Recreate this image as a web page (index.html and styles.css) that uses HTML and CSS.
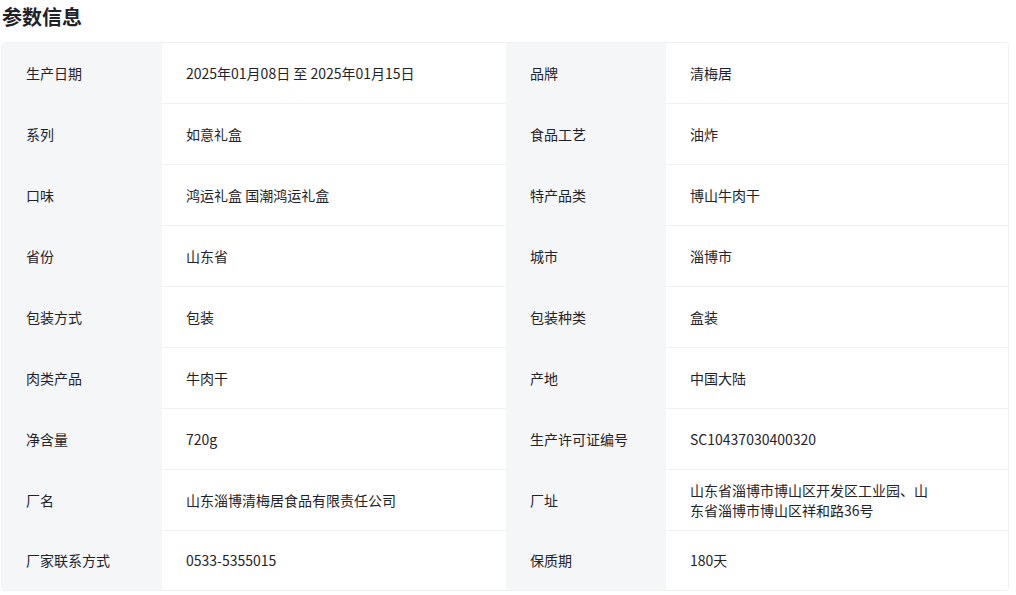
FILE: index.html
```html
<!DOCTYPE html>
<html lang="zh-CN">
<head>
<meta charset="utf-8">
<title>参数信息</title>
<link rel="stylesheet" href="styles.css">
</head>
<body>
<div class="page">
  <h2 class="title">参数信息</h2>
  <div class="params">
    <div class="row"><div class="label">生产日期</div><div class="value">2025年01月08日 至 2025年01月15日</div><div class="label">品牌</div><div class="value">清梅居</div></div>
    <div class="row"><div class="label">系列</div><div class="value">如意礼盒</div><div class="label">食品工艺</div><div class="value">油炸</div></div>
    <div class="row"><div class="label">口味</div><div class="value">鸿运礼盒 国潮鸿运礼盒</div><div class="label">特产品类</div><div class="value">博山牛肉干</div></div>
    <div class="row"><div class="label">省份</div><div class="value">山东省</div><div class="label">城市</div><div class="value">淄博市</div></div>
    <div class="row"><div class="label">包装方式</div><div class="value">包装</div><div class="label">包装种类</div><div class="value">盒装</div></div>
    <div class="row"><div class="label">肉类产品</div><div class="value">牛肉干</div><div class="label">产地</div><div class="value">中国大陆</div></div>
    <div class="row"><div class="label">净含量</div><div class="value">720g</div><div class="label">生产许可证编号</div><div class="value">SC10437030400320</div></div>
    <div class="row"><div class="label">厂名</div><div class="value">山东淄博清梅居食品有限责任公司</div><div class="label">厂址</div><div class="value"><span class="wrap">山东省淄博市博山区开发区工业园、山东省淄博市博山区祥和路36号</span></div></div>
    <div class="row last"><div class="label">厂家联系方式</div><div class="value">0533-5355015</div><div class="label">保质期</div><div class="value">180天</div></div>
  </div>
</div>
</body>
</html>
```
FILE: styles.css
```css
html, body {
  margin: 0;
  padding: 0;
  background: #ffffff;
}
body {
  font-family: "Noto Sans CJK SC", "Noto Sans", sans-serif;
  color: #1f2329;
}
.page {
  padding: 0 7px 0 1px;
}
.title {
  margin: 3px 0 11px 1px;
  font-size: 20px;
  line-height: 28px;
  font-weight: 700;
  color: #1f2329;
}
.params {
  border: 1px solid #eef0f2;
  border-radius: 4px;
  overflow: hidden;
}
.row {
  display: grid;
  grid-template-columns: 160px 344px 160px 1fr;
  height: 61px;
}
.row.last {
  height: 59px;
}
.label, .value {
  display: flex;
  align-items: center;
  padding: 0 0 1px 24px;
  font-size: 14px;
  line-height: 20px;
  border-bottom: 1px solid #f0f1f3;
  box-sizing: border-box;
}
.label {
  background: #f5f6f8;
  border-bottom-color: #f5f6f8;
}
.value {
  background: #ffffff;
}
.row.last .label, .row.last .value {
  border-bottom: none;
}
.wrap {
  max-width: 245px;
}
```
